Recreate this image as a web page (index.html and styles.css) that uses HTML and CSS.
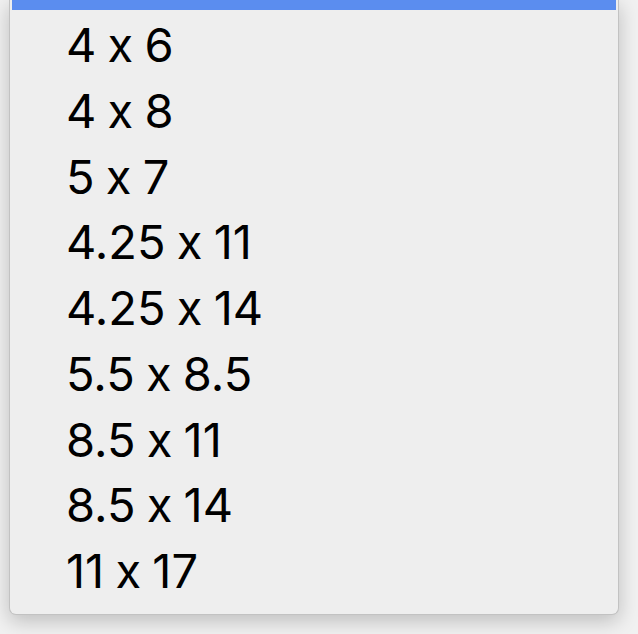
FILE: index.html
```html
<!DOCTYPE html>
<html lang="en">
<head>
    <meta charset="UTF-8">
    <title>Paper size</title>
    <link rel="stylesheet" href="styles.css">
</head>
<body>
    <div class="menu">
        <div class="highlight"></div>
        <ul class="menu-list">
            <li>4 x 6</li>
            <li>4 x 8</li>
            <li>5 x 7</li>
            <li>4.25 x 11</li>
            <li>4.25 x 14</li>
            <li>5.5 x 8.5</li>
            <li>8.5 x 11</li>
            <li>8.5 x 14</li>
            <li>11 x 17</li>
        </ul>
    </div>
</body>
</html>
```

FILE: styles.css
```css
html, body {
    margin: 0;
    padding: 0;
}
body {
    background: #f1f1f1;
    font-family: Inter, "Liberation Sans", Arial, sans-serif;
    padding: 0 19px 0 9px;
    height: 634px;
    box-sizing: border-box;
    overflow: hidden;
}
.menu {
    background: #eeeeee;
    border: 1px solid #c2c2c2;
    border-top: none;
    border-radius: 0 0 7px 7px;
    box-shadow: 0 6px 20px rgba(0, 0, 0, 0.22);
    padding: 0 2px 10px 2px;
}
.highlight {
    height: 10px;
    background-color: #5b8def;
}
.menu-list {
    list-style: none;
    margin: 0;
    padding: 2px 0 0 0;
}
.menu-list li {
    height: 65.75px;
    line-height: 65.75px;
    font-size: 47px;
    font-feature-settings: "calt" 0;
    word-spacing: -2px;
    color: #000;
    padding-left: 54px;
}
```
